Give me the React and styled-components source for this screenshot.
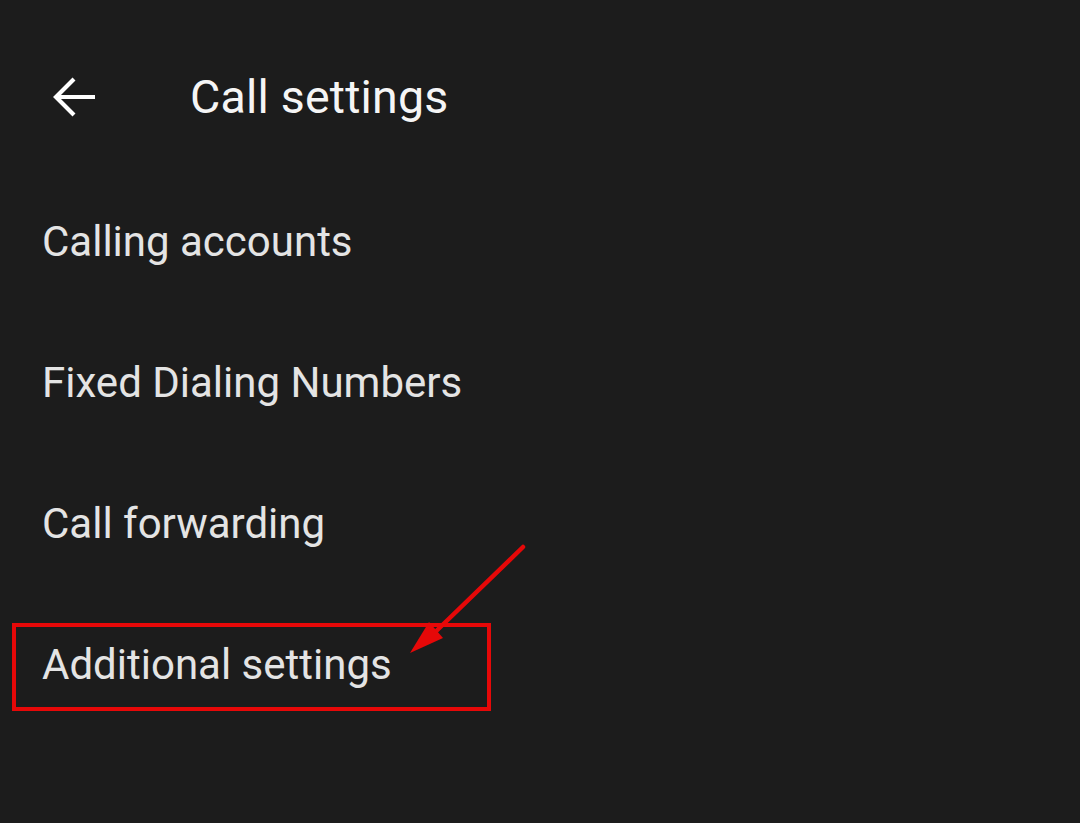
import styled, { createGlobalStyle } from "styled-components";

const GlobalStyle = createGlobalStyle`
  html, body {
    margin: 0;
    padding: 0;
    background: #1c1c1c;
  }
  body {
    font-family: Roboto, "Liberation Sans", sans-serif;
  }
`;

const Screen = styled.div`
  position: relative;
  width: 1080px;
  height: 823px;
  background: #1c1c1c;
  overflow: hidden;
`;

const TopBar = styled.header`
  display: flex;
  align-items: center;
  height: 74px;
  margin-top: 60px;
  padding-left: 50px;
`;

const BackButton = styled.button`
  display: flex;
  align-items: center;
  justify-content: center;
  width: 48px;
  height: 48px;
  padding: 0;
  border: none;
  background: none;
  color: #ffffff;
`;

const Title = styled.h1`
  margin: 0 0 0 92px;
  font-size: 46.5px;
  font-weight: 400;
  color: #f5f5f5;
  letter-spacing: 0.2px;
`;

const List = styled.ul`
  list-style: none;
  margin: 0;
  padding: 37px 0 0;
`;

const Item = styled.li`
  position: relative;
  display: flex;
  align-items: center;
  height: 141px;
  padding-left: 42px;
  font-size: 42px;
  color: #e4e4e4;
`;

const Highlight = styled.div`
  position: absolute;
  left: 12px;
  top: 29px;
  width: 471px;
  height: 80px;
  border: 4px solid #e60808;
`;

const Pointer = styled.svg`
  position: absolute;
  left: 400px;
  top: 540px;
`;

const items = [
  "Calling accounts",
  "Fixed Dialing Numbers",
  "Call forwarding",
  "Additional settings",
];

export default function App() {
  return (
    <Screen>
      <GlobalStyle />
      <TopBar>
        <BackButton aria-label="Back">
          <svg width="46" height="42" viewBox="0 0 46 42" fill="none">
            <path
              d="M44 21H5M23 3L5 21l18 18"
              stroke="currentColor"
              strokeWidth="4.2"
            />
          </svg>
        </BackButton>
        <Title>Call settings</Title>
      </TopBar>
      <List>
        {items.map((label, i) => (
          <Item key={label}>
            {label}
            {i === items.length - 1 && <Highlight />}
          </Item>
        ))}
      </List>
      <Pointer width="130" height="120" viewBox="0 0 130 120">
        <path d="M123 7L28 99" stroke="#e60808" strokeWidth="4.5" strokeLinecap="round" />
        <path d="M10 113L29 82L43 98Z" fill="#e60808" />
      </Pointer>
    </Screen>
  );
}
